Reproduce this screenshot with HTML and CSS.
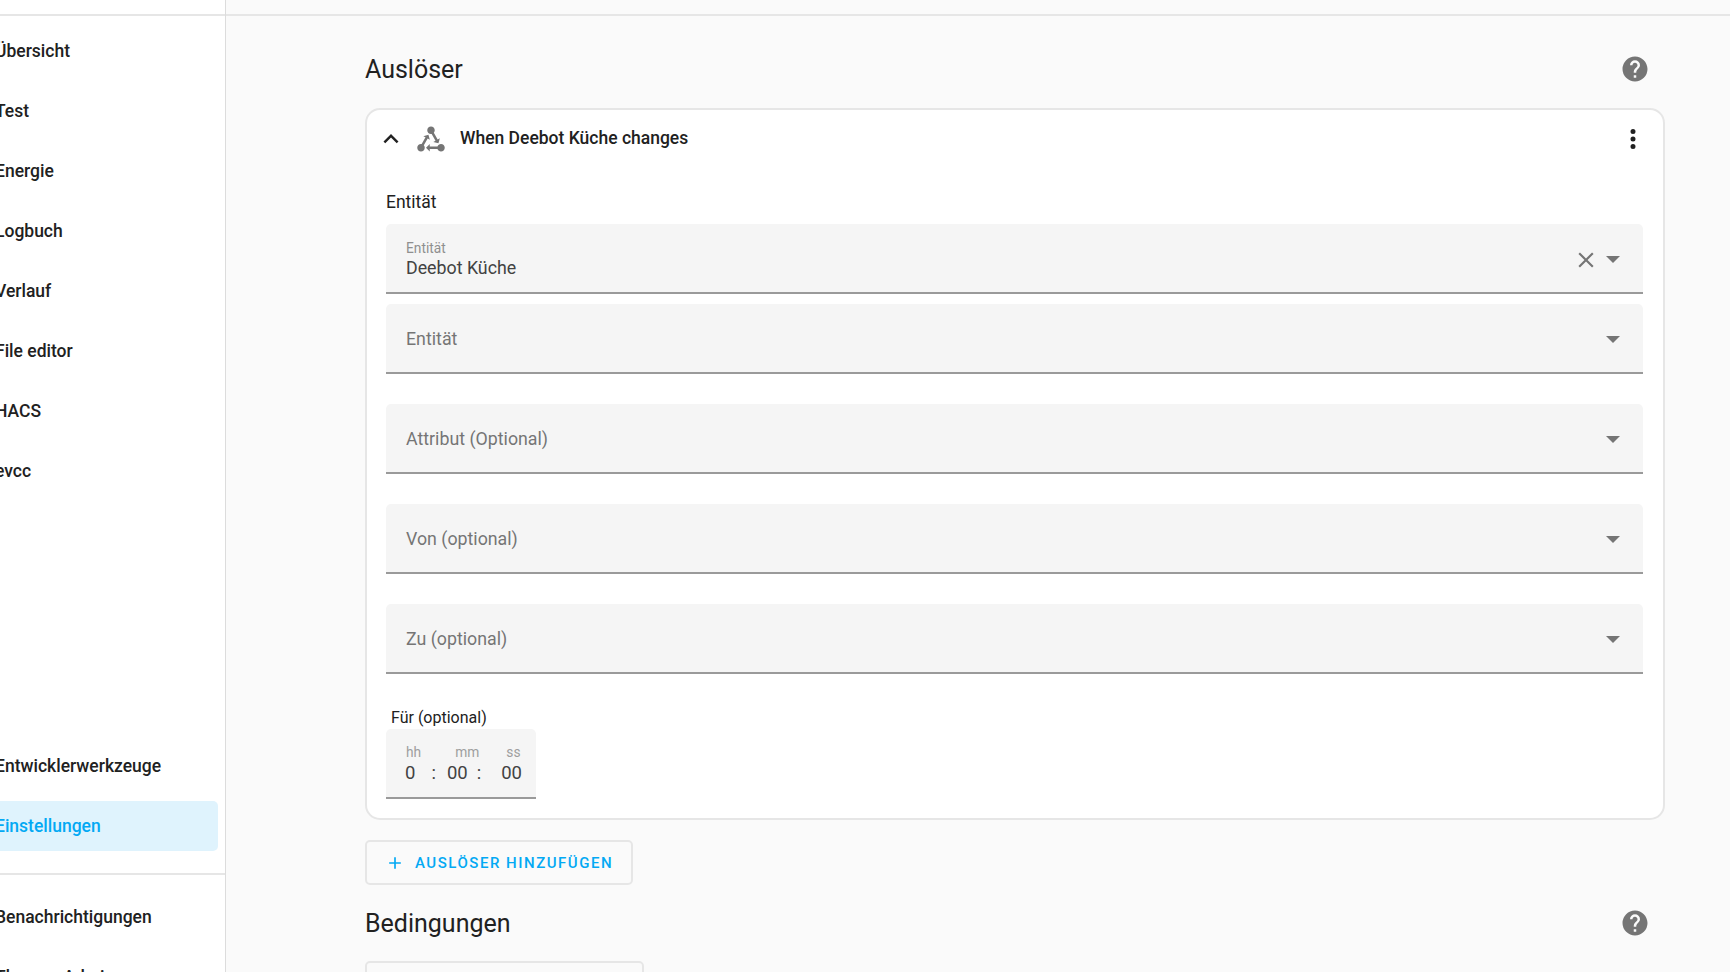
FILE: index.html
```html
<!DOCTYPE html>
<html lang="de">
<head>
<meta charset="utf-8">
<title>Automation</title>
<link rel="stylesheet" href="styles.css">
</head>
<body>
<div class="app">
  <aside class="sidebar">
    <div class="bar"></div>
    <nav class="nav nav-main">
      <a class="item"><span class="label">Übersicht</span></a>
      <a class="item"><span class="label">Test</span></a>
      <a class="item"><span class="label">Energie</span></a>
      <a class="item"><span class="label">Logbuch</span></a>
      <a class="item"><span class="label">Verlauf</span></a>
      <a class="item"><span class="label">File editor</span></a>
      <a class="item"><span class="label">HACS</span></a>
      <a class="item"><span class="label">evcc</span></a>
    </nav>
    <nav class="nav nav-tools">
      <a class="item"><span class="label">Entwicklerwerkzeuge</span></a>
      <a class="item active"><span class="label">Einstellungen</span></a>
    </nav>
    <nav class="nav nav-user">
      <a class="item"><span class="label">Benachrichtigungen</span></a>
      <a class="item"><span class="label">Thomas Admin</span></a>
    </nav>
  </aside>
  <main class="main">
    <div class="bar"></div>
    <div class="content">
      <header class="section-head section-first">
        <h2>Auslöser</h2>
        <svg class="help" viewBox="0 0 24 24"><path d="M15.07,11.25L14.17,12.17C13.45,12.89 13,13.5 13,15H11V14.5C11,13.39 11.45,12.39 12.17,11.67L13.41,10.41C13.78,10.05 14,9.55 14,9C14,7.89 13.1,7 12,7A2,2 0 0,0 10,9H8A4,4 0 0,1 12,5A4,4 0 0,1 16,9C16,9.88 15.64,10.67 15.07,11.25M13,19H11V17H13M12,2A10,10 0 0,0 2,12A10,10 0 0,0 12,22A10,10 0 0,0 22,12C22,6.47 17.5,2 12,2Z"/></svg>
      </header>
      <section class="card">
        <div class="card-head">
          <svg class="chevron" viewBox="0 0 24 24"><path d="M7.41,15.41L12,10.83L16.59,15.41L18,14L12,8L6,14L7.41,15.41Z"/></svg>
          <svg class="machine" viewBox="0 0 24 24"><path d="M6.27 17.05C6.72 17.58 7 18.25 7 19C7 20.66 5.66 22 4 22S1 20.66 1 19 2.34 16 4 16C4.18 16 4.36 16 4.53 16.05L7.6 10.69L5.86 9.7L9.95 8.58L11.07 12.67L9.33 11.68L6.27 17.05M20 16C18.7 16 17.6 16.84 17.18 18H11V16L8 19L11 22V20H17.18C17.6 21.16 18.7 22 20 22C21.66 22 23 20.66 23 19S21.66 16 20 16M12 8C12.18 8 12.36 8 12.53 7.95L15.6 13.31L13.86 14.3L17.95 15.42L19.07 11.33L17.33 12.32L14.27 6.95C14.72 6.42 15 5.75 15 5C15 3.34 13.66 2 12 2S9 3.34 9 5 10.34 8 12 8Z"/></svg>
          <span class="card-title">When Deebot Küche changes</span>
          <svg class="dots" viewBox="0 0 24 24"><path d="M12,16A2,2 0 0,1 14,18A2,2 0 0,1 12,20A2,2 0 0,1 10,18A2,2 0 0,1 12,16M12,10A2,2 0 0,1 14,12A2,2 0 0,1 12,14A2,2 0 0,1 10,12A2,2 0 0,1 12,10M12,4A2,2 0 0,1 14,6A2,2 0 0,1 12,8A2,2 0 0,1 10,6A2,2 0 0,1 12,4Z"/></svg>
        </div>
        <div class="group-label">Entität</div>
        <div class="field field-filled">
          <div class="field-text">
            <span class="float-label">Entität</span>
            <span class="value">Deebot Küche</span>
          </div>
          <svg class="clear" viewBox="0 0 24 24"><path d="M19,6.41L17.59,5L12,10.59L6.41,5L5,6.41L10.59,12L5,17.59L6.41,19L12,13.41L17.59,19L19,17.59L13.41,12L19,6.41Z"/></svg>
          <span class="arrow"></span>
        </div>
        <div class="field field-second"><span class="placeholder">Entität</span><span class="arrow"></span></div>
        <div class="field field-spaced"><span class="placeholder">Attribut (Optional)</span><span class="arrow"></span></div>
        <div class="field field-spaced"><span class="placeholder">Von (optional)</span><span class="arrow"></span></div>
        <div class="field field-spaced"><span class="placeholder">Zu (optional)</span><span class="arrow"></span></div>
        <div class="duration-label">Für (optional)</div>
        <div class="duration">
          <div class="duration-row duration-names">
            <span class="n-hh">hh</span><span class="n-mm">mm</span><span class="n-ss">ss</span>
          </div>
          <div class="duration-row duration-values">
            <span class="v-hh">0</span><span class="v-c1">:</span><span class="v-mm">00</span><span class="v-c2">:</span><span class="v-ss">00</span>
          </div>
        </div>
      </section>
      <button class="add add-trigger">
        <svg class="plus" viewBox="0 0 24 24"><path d="M19,13H13V19H11V13H5V11H11V5H13V11H19V13Z"/></svg>
        <span>AUSLÖSER HINZUFÜGEN</span>
      </button>
      <header class="section-head section-next">
        <h2>Bedingungen</h2>
        <svg class="help" viewBox="0 0 24 24"><path d="M15.07,11.25L14.17,12.17C13.45,12.89 13,13.5 13,15H11V14.5C11,13.39 11.45,12.39 12.17,11.67L13.41,10.41C13.78,10.05 14,9.55 14,9C14,7.89 13.1,7 12,7A2,2 0 0,0 10,9H8A4,4 0 0,1 12,5A4,4 0 0,1 16,9C16,9.88 15.64,10.67 15.07,11.25M13,19H11V17H13M12,2A10,10 0 0,0 2,12A10,10 0 0,0 12,22A10,10 0 0,0 22,12C22,6.47 17.5,2 12,2Z"/></svg>
      </header>
      <button class="add add-condition"></button>
    </div>
  </main>
</div>
</body>
</html>
```
FILE: styles.css
```css
* { box-sizing: border-box; }
html, body { margin: 0; height: 100%; overflow: hidden; }
body { font-family: Roboto, "Liberation Sans", sans-serif; color: #212121; background: #fafafa; }
.app { display: grid; grid-template-columns: 226px 1fr; height: 972px; overflow: hidden; }
.bar { height: 16px; border-bottom: 2px solid #e6e6e6; }
.sidebar { background: #fff; border-right: 1px solid #dcdcdc; overflow: hidden; height: 972px; }
.main { background: #fafafa; overflow: hidden; height: 972px; }
.nav { display: flex; flex-direction: column; gap: 10px; }
.nav-main { padding-top: 9px; }
.nav-tools { margin-top: 246px; padding-bottom: 22px; border-bottom: 2px solid #e6e6e6; }
.nav-user { padding-top: 17px; }
.item { display: flex; align-items: center; flex: none; height: 50px; width: 218px; font-size: 17.5px; font-weight: 500; border-radius: 0 5px 5px 0; }
.label { margin-left: -5px; padding-top: 1px; white-space: nowrap; }
.nav-tools .label, .nav-user .label { padding-top: 0; }
.item.active { background: #dff3fd; color: #03a9f4; }
.content { padding: 0 65px 0 139px; }
.section-head { display: flex; align-items: center; justify-content: space-between; height: 40px; }
.section-first { margin-top: 33px; }
.section-first h2 { padding-top: 1px; }
.section-next { margin-top: 19px; }
.section-next .help { margin-bottom: 2px; }
.section-head h2 { margin: 0; font-size: 25px; font-weight: 400; line-height: 40px; }
.help { width: 30px; height: 30px; fill: #757575; margin-right: 15px; }
.card { margin-top: 19px; height: 712px; background: #fff; border: 2px solid #e6e6e6; border-radius: 15px; padding: 0 20px 0 19px; }
.card-head { display: flex; align-items: center; height: 58px; margin-left: -4px; }
.chevron { width: 30px; height: 30px; fill: #212121; flex: none; margin-left: -6px; }
.machine { width: 30px; height: 30px; fill: #757575; flex: none; margin-left: 10px; }
.card-title { font-size: 17.5px; font-weight: 500; margin-left: 14px; flex: 1; padding-bottom: 2px; }
.dots { width: 30px; height: 30px; fill: #212121; flex: none; margin-right: -5px; }
.group-label { margin-top: 21px; height: 35px; font-size: 17.5px; line-height: 26px; }
.field { display: flex; align-items: center; height: 70px; background: #f5f5f5; border-bottom: 2px solid #9a9a9a; border-radius: 5px 5px 0 0; padding: 0 20px; }
.field-second { margin-top: 10px; }
.field-spaced { margin-top: 30px; }
.field-text { display: flex; flex-direction: column; flex: 1; padding-top: 1px; }
.float-label { font-size: 13.75px; line-height: 18px; color: #8f8f8f; }
.value { font-size: 17.8px; line-height: 22px; color: #424242; }
.placeholder { flex: 1; font-size: 17.8px; color: #757575; padding-top: 1px; }
.clear { width: 26px; height: 26px; fill: #757575; margin-right: 5px; margin-top: 3px; flex: none; }
.arrow { flex: none; width: 0; height: 0; margin: 2px 3px 0 2px; border-left: 7px solid transparent; border-right: 7px solid transparent; border-top: 7px solid #757575; }
.duration-label { margin: 33px 0 0 5px; font-size: 16px; line-height: 22px; height: 22px; }
.duration { width: 150px; height: 70px; background: #f5f5f5; border-bottom: 2px solid #9a9a9a; border-radius: 5px 5px 0 0; padding-top: 14px; }
.duration-row { display: flex; white-space: nowrap; }
.duration-names { font-size: 13.75px; line-height: 18px; color: #9e9e9e; }
.duration-values { font-size: 18.5px; line-height: 24px; color: #424242; }
.n-hh { margin-left: 20px; }
.n-mm { margin-left: 34px; }
.n-ss { margin-left: 27px; }
.v-hh { margin-left: 19px; }
.v-c1 { margin-left: 16px; }
.v-mm { margin-left: 11px; }
.v-c2 { margin-left: 9px; }
.v-ss { margin-left: 20px; }
.add { display: flex; align-items: center; height: 45px; background: transparent; border: 2px solid #e6e6e6; border-radius: 5px; padding: 0; font-family: inherit; color: #03a9f4; }
.add-trigger { margin-top: 20px; width: 268px; padding-left: 18px; font-size: 15px; font-weight: 500; letter-spacing: 1.52px; }
.add-condition { margin-top: 17px; width: 279px; }
.plus { width: 20px; height: 20px; fill: #03a9f4; margin-right: 10px; flex: none; }
```
